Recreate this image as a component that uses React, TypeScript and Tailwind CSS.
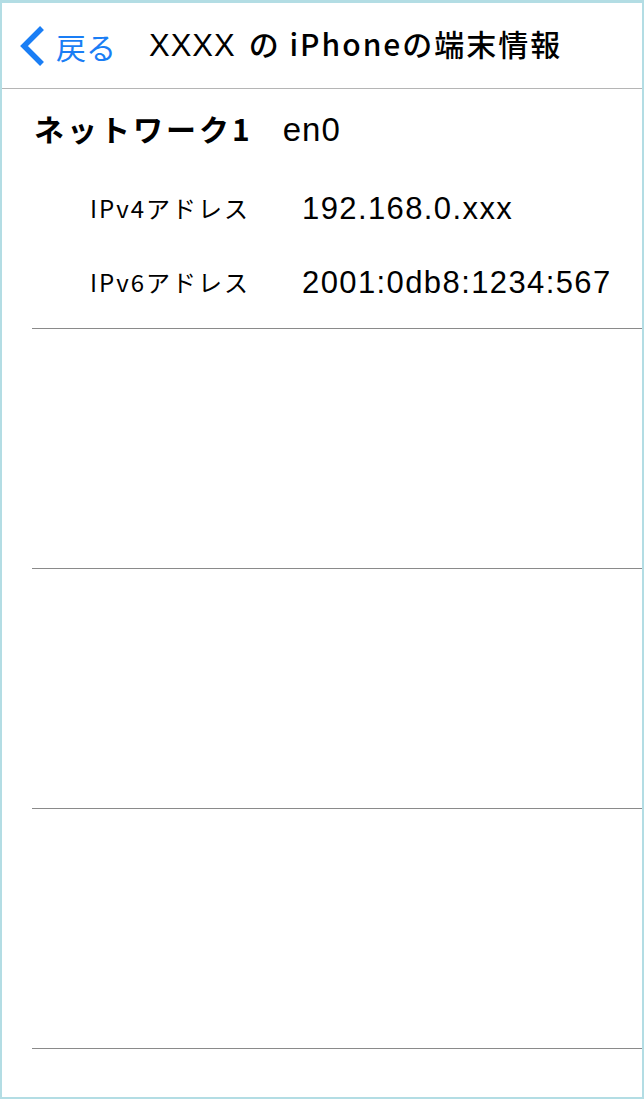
import React from 'react';

const cjk = { fontFamily: '"Noto Sans CJK JP", "Noto Sans", sans-serif' };
const latin = { fontFamily: '"Liberation Sans", "Noto Sans CJK JP", sans-serif' };

function Section({ children }: { children?: React.ReactNode }) {
    return (
        <div className="h-[240px] ml-[30px] border-b border-[#8a8a8a]">
            {children}
        </div>
    );
}

function AddressRow({ label, value }: { label: string; value: string }) {
    return (
        <div className="flex items-center h-[74px]">
            <span className="w-[270px] pl-[58px] text-[24px] text-black leading-none tracking-[2px]">{label}</span>
            <span className="text-[31px] text-black leading-none tracking-[1.4px]" style={latin}>{value}</span>
        </div>
    );
}

export default function App() {
    return (
        <div className="w-[644px] h-[1099px] bg-white border-[#b3dde4] border-t-[3px] border-x-2 border-b-2 overflow-hidden" style={cjk}>
            <div className="flex items-center h-[86px] border-b border-[#b5b5b5]">
                <svg width="30" height="42" viewBox="0 0 30 42" className="ml-[15px]">
                    <path d="M25 3 L7 21 L25 39" fill="none" stroke="#1a7ef5" strokeWidth="5.5" />
                </svg>
                <span className="ml-[9px] text-[30px] text-[#1a7ef5] leading-none">戻る</span>
                <div className="flex items-baseline ml-[33px]">
                    <span className="text-[31px] text-black tracking-[1px]" style={latin}>XXXX</span>
                    <span className="ml-[13px] text-[30px] text-black font-medium tracking-[2px]">の iPhoneの端末情報</span>
                </div>
            </div>
            <Section>
                <div className="flex items-baseline pt-[24px] h-[82px] pl-[2px]">
                    <span className="text-[30px] font-bold text-black leading-none tracking-[3px]">ネットワーク1</span>
                    <span className="ml-[30px] text-[33px] text-black leading-none tracking-[1px]" style={latin}>en0</span>
                </div>
                <AddressRow label="IPv4アドレス" value="192.168.0.xxx" />
                <AddressRow label="IPv6アドレス" value="2001:0db8:1234:567" />
            </Section>
            <Section />
            <Section />
            <Section />
        </div>
    );
}
